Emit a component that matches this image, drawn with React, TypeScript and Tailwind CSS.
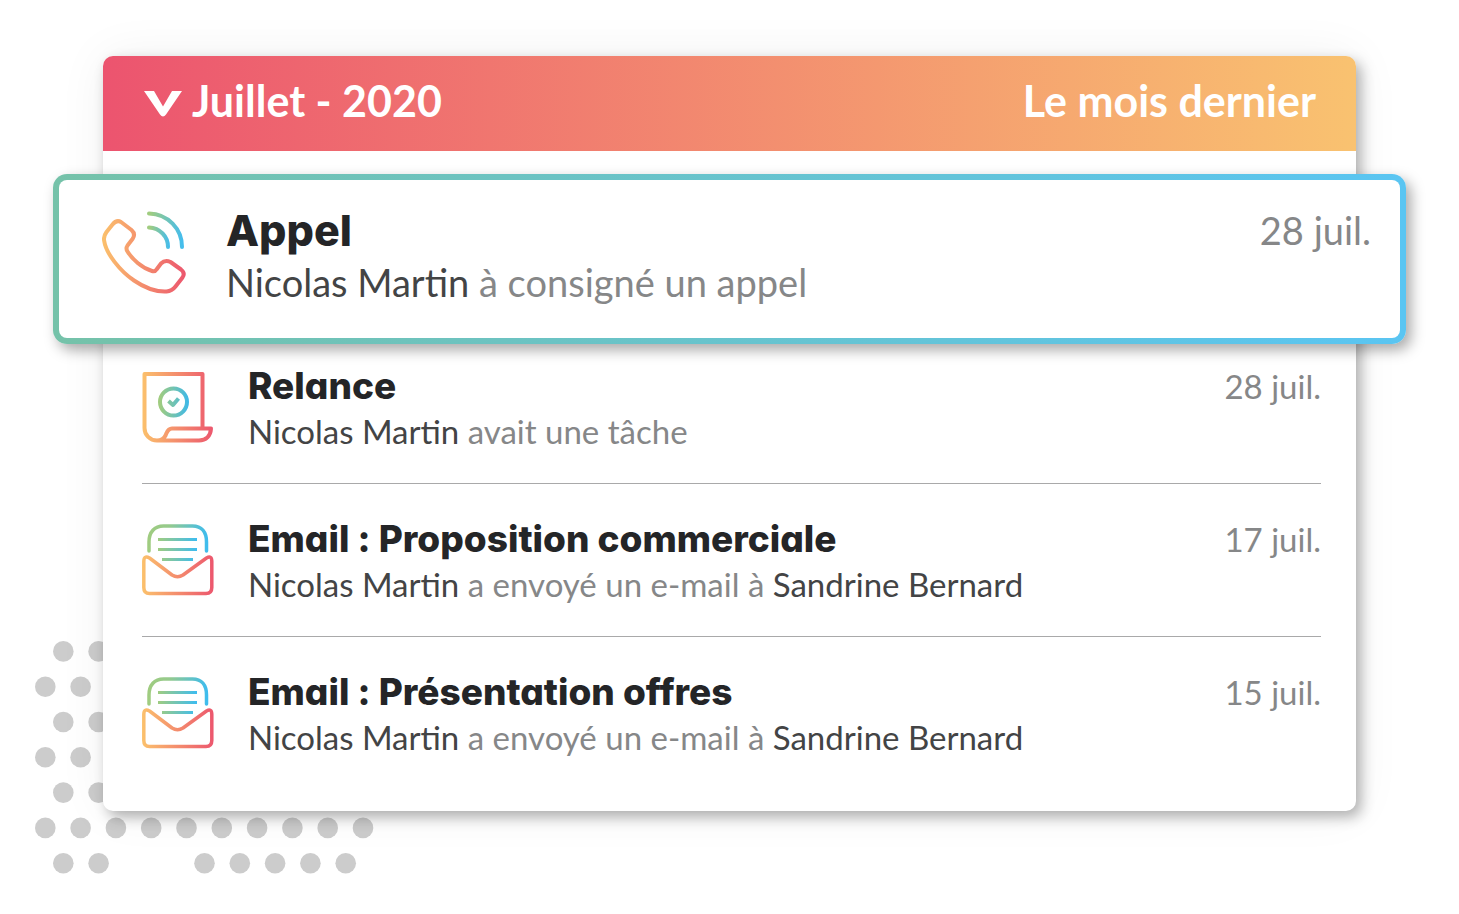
import { useState } from "react";

interface Activity {
  id: number;
  icon: "task" | "mail";
  title: string;
  author: string;
  action: string;
  target?: string;
  date: string;
}

const activities: Activity[] = [
  { id: 1, icon: "task", title: "Relance", author: "Nicolas Martin", action: "avait une tâche", date: "28 juil." },
  { id: 2, icon: "mail", title: "Email : Proposition commerciale", author: "Nicolas Martin", action: "a envoyé un e-mail à", target: "Sandrine Bernard", date: "17 juil." },
  { id: 3, icon: "mail", title: "Email : Présentation offres", author: "Nicolas Martin", action: "a envoyé un e-mail à", target: "Sandrine Bernard", date: "15 juil." },
];

// columns filled on each row of the dot pattern
const dotRows = [
  { offset: 18, cols: [0, 1] },
  { offset: 0, cols: [0, 1] },
  { offset: 18, cols: [0, 1] },
  { offset: 0, cols: [0, 1] },
  { offset: 18, cols: [0, 1] },
  { offset: 0, cols: [0, 1, 2, 3, 4, 5, 6, 7, 8, 9] },
  { offset: 18, cols: [0, 1, 4, 5, 6, 7, 8] },
];

// single-storey "a" and a colon that stays on the baseline
const titleFont = "font-['Inter',sans-serif] font-extrabold text-[#242527] [font-feature-settings:'cv11','calt'_0]";

function Gradients() {
  return (
    <svg width="0" height="0" className="absolute" aria-hidden="true">
      <defs>
        <linearGradient id="warm" gradientUnits="userSpaceOnUse" x1="0" y1="0" x2="72" y2="0">
          <stop offset="0" stopColor="#fbc16c" />
          <stop offset="1" stopColor="#ec566e" />
        </linearGradient>
        <linearGradient id="warm-phone" gradientUnits="userSpaceOnUse" x1="0" y1="0" x2="84" y2="0">
          <stop offset="0" stopColor="#fbc16c" />
          <stop offset="1" stopColor="#ec566e" />
        </linearGradient>
        <linearGradient id="cool-wave" gradientUnits="userSpaceOnUse" x1="48" y1="0" x2="80" y2="0">
          <stop offset="0" stopColor="#a0cc80" />
          <stop offset="1" stopColor="#45bdec" />
        </linearGradient>
        <linearGradient id="cool-wave-small" gradientUnits="userSpaceOnUse" x1="48" y1="0" x2="67" y2="0">
          <stop offset="0" stopColor="#a0cc80" />
          <stop offset="1" stopColor="#45bdec" />
        </linearGradient>
        <linearGradient id="cool-check" gradientUnits="userSpaceOnUse" x1="18" y1="0" x2="47" y2="0">
          <stop offset="0" stopColor="#a0cc80" />
          <stop offset="1" stopColor="#3cb8ea" />
        </linearGradient>
        <linearGradient id="cool-mail" gradientUnits="userSpaceOnUse" x1="6" y1="0" x2="66" y2="0">
          <stop offset="0" stopColor="#a0cc80" />
          <stop offset="0.35" stopColor="#95ca8c" />
          <stop offset="1" stopColor="#3cbcf0" />
        </linearGradient>
        <linearGradient id="cool-lines" gradientUnits="userSpaceOnUse" x1="16" y1="0" x2="55" y2="0">
          <stop offset="0" stopColor="#a0cc80" />
          <stop offset="1" stopColor="#3cbcf0" />
        </linearGradient>
      </defs>
    </svg>
  );
}

function PhoneIcon() {
  return (
    <svg viewBox="0 0 84 84" className="w-[84px] h-[84px] shrink-0" fill="none" strokeWidth="4" strokeLinecap="round" strokeLinejoin="round" aria-hidden="true">
      <path
        stroke="url(#warm-phone)"
        d="M10.5 13.5 4.5 21Q1.2 25.5 2.2 30C4 42.5 18 60 32 69.5C43 77 55 81 64.5 80.5Q70 80 73.5 75.5L80.5 66.5Q83.5 62 79 58.5L68.5 51Q63 48.5 59 52.5L54.5 58.5Q53 61 50 60C40 57 30 48 25.5 40.5Q23.5 37.5 25.5 34.5L30.5 28Q34 23 29.5 19L19 11Q14.5 8.5 10.5 13.5Z"
      />
      <path stroke="url(#cool-wave)" d="M47 2.5C66 3 80 18 80 36" />
      <path stroke="url(#cool-wave-small)" d="M47 16.5C58 17 66 25.5 66 36" />
    </svg>
  );
}

function TaskIcon() {
  return (
    <svg viewBox="0 0 72 72" className="w-[72px] h-[72px] shrink-0" fill="none" strokeWidth="4" strokeLinejoin="round" aria-hidden="true">
      <path stroke="url(#warm)" d="M60.5 57.5V3H2.5V57C2.5 64 8 69.5 15 69.5H57C64 69.5 68.5 65 69 57.5H30C25.5 57.5 25 61.5 23.5 64.5Q21 69.5 15 69.5" />
      <circle cx="31.5" cy="31" r="13.5" stroke="url(#cool-check)" />
      <path stroke="url(#cool-check)" d="M26.5 30 31 34 36.5 27.5" />
    </svg>
  );
}

function MailIcon() {
  return (
    <svg viewBox="0 0 72 72" className="w-[72px] h-[72px] shrink-0" fill="none" strokeWidth="3.5" strokeLinejoin="round" aria-hidden="true">
      <path stroke="url(#cool-mail)" strokeLinecap="round" d="M7 27V18C7 8 12.5 2 21.5 2H50.5C59.5 2 64.5 8 64.5 18V27" />
      <path stroke="url(#cool-lines)" strokeWidth="3" d="M16 15.5H55M16 25.5H55M20 35.5H51" />
      <path
        stroke="url(#warm)"
        d="M1.8 37.5V63.5Q1.8 69.5 7.5 69.5H64Q69.8 69.5 69.8 63.5V37.5Q69.8 31 64.5 34L41 51Q35.5 54.5 30 51L7.5 34Q1.8 31 1.8 37.5Z"
      />
    </svg>
  );
}

function DotPattern() {
  return (
    <svg viewBox="0 0 340 234" className="absolute left-[35px] bottom-10 w-[340px] h-[234px]" fill="#cccccc" aria-hidden="true">
      {dotRows.map((row, y) =>
        row.cols.map((col) => <circle key={`${y}-${col}`} cx={10.3 + row.offset + col * 35.3} cy={11.4 + y * 35.3} r="10.3" />)
      )}
    </svg>
  );
}

function ActivityRow({ activity }: { activity: Activity }) {
  return (
    <li className="flex items-start gap-[34px] pt-8 pb-[30px] border-b border-[#a9a9aa] first:pt-[19px] last:border-b-0 last:pb-[52px]">
      <div className="pt-2">{activity.icon === "task" ? <TaskIcon /> : <MailIcon />}</div>
      <div className="flex-1">
        <h3 className={`${titleFont} text-[37px] leading-[46px]`}>{activity.title}</h3>
        <p className="text-[33px] leading-[44px] text-[#868788]">
          <span className="text-[#434445]">{activity.author}</span> {activity.action}
          {activity.target && <span className="text-[#434445]"> {activity.target}</span>}
        </p>
      </div>
      <time className="text-[33px] leading-[46px] text-[#868788] whitespace-nowrap">{activity.date}</time>
    </li>
  );
}

export default function App() {
  const [open, setOpen] = useState(true);

  return (
    <main className="relative bg-white px-[103px] pt-14 pb-[103px] font-['Lato',sans-serif]">
      <Gradients />
      <DotPattern />
      <section className="relative rounded-[10px] bg-white shadow-[5px_6px_14px_rgba(0,0,0,0.3),0_0_50px_rgba(0,0,0,0.06)]">
        <header className="flex items-center justify-between h-[95px] pl-[41px] pr-10 pb-[5px] rounded-t-[10px] bg-linear-to-r/srgb from-[#ec546f] to-[#f9c270] text-[43px] leading-[52px] font-bold text-white">
          <button type="button" aria-expanded={open} onClick={() => setOpen(!open)} className="flex items-center gap-2.5 cursor-pointer">
            <svg viewBox="0 0 38 26" className="w-[38px] h-[26px] mt-1.5" fill="currentColor" aria-hidden="true">
              <path d="M0 0H10L19 15.5 28 0H38L22 23.5Q19 27.500 16 23.5Z" />
            </svg>
            Juillet - 2020
          </button>
          <h2>Le mois dernier</h2>
        </header>

        {open && (
          <>
            <article className="relative mt-[23px] -mx-[50px] p-1.5 rounded-[14px] bg-linear-to-r/srgb from-[#75c2a9] to-[#5ac5f2] shadow-[5px_6px_14px_rgba(0,0,0,0.34)]">
              <div className="flex items-start gap-10 pt-6 pb-[30px] pl-[43px] pr-[29px] rounded-lg bg-white">
                <div className="pt-[7px]">
                  <PhoneIcon />
                </div>
                <div className="flex-1">
                  <h3 className={`${titleFont} text-[43px] leading-[52px]`}>Appel</h3>
                  <p className="text-[38px] leading-[52px] text-[#868788]">
                    <span className="text-[#434445]">Nicolas Martin</span> à consigné un appel
                  </p>
                </div>
                <time className="text-[38px] leading-[52px] text-[#868788] whitespace-nowrap">28 juil.</time>
              </div>
            </article>

            <ul className="pl-[39px] pr-[35px]">
              {activities.map((activity) => (
                <ActivityRow key={activity.id} activity={activity} />
              ))}
            </ul>
          </>
        )}
      </section>
    </main>
  );
}
